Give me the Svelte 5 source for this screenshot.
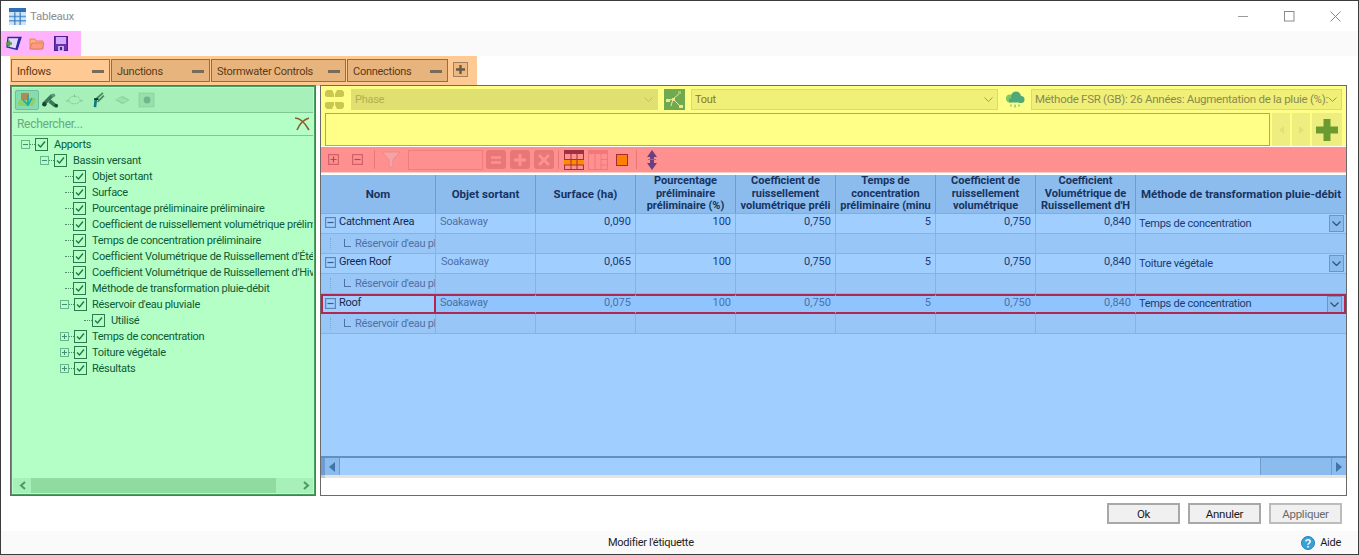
<script>
  const tabs = [
    { name: 'Inflows', w: 99, active: true },
    { name: 'Junctions', w: 99 },
    { name: 'Stormwater Controls', w: 135 },
    { name: 'Connections', w: 101 }
  ];
  const leaves = [
    'Objet sortant', 'Surface', 'Pourcentage préliminaire préliminaire',
    'Coefficient de ruissellement volumétrique préliminaire', 'Temps de concentration préliminaire',
    "Coefficient Volumétrique de Ruissellement d'Été", "Coefficient Volumétrique de Ruissellement d'Hiver",
    'Méthode de transformation pluie-débit'
  ];
  const closed = ['Temps de concentration', 'Toiture végétale', 'Résultats'];
  const headers = [
    ['Nom'], ['Objet sortant'], ['Surface (ha)'],
    ['Pourcentage', 'préliminaire', 'préliminaire (%)'],
    ['Coefficient de', 'ruissellement', 'volumétrique préli'],
    ['Temps de', 'concentration', 'préliminaire  (minu'],
    ['Coefficient de', 'ruissellement', 'volumétrique'],
    ['Coefficient', 'Volumétrique de', "Ruissellement d'H"],
    ['Méthode de transformation pluie-débit']
  ];
  const rows = [
    { name: 'Catchment Area', area: '0,090', method: 'Temps de concentration', v: '0,840' },
    { name: 'Green Roof', area: '0,065', method: 'Toiture végétale', v: '0,840', shift: true },
    { name: 'Roof', area: '0,075', method: 'Temps de concentration', v: '0,840', selected: true }
  ];
</script>

{#snippet check()}
  <svg class="check" viewBox="0 0 13 13"><rect x=".5" y=".5" width="12" height="12" fill="none" stroke="#2d7a4d"/><path d="M3 6.500 5.500 9 10 3.500" fill="none" stroke="#1f7a45" stroke-width="1.400"/></svg>
{/snippet}

{#snippet box(open, cls = 'exp')}
  <svg class={cls} viewBox="0 0 9 9"><rect x=".5" y=".5" width="8" height="8" fill="none" stroke="currentColor" opacity=".65"/><path d={open ? 'M2 4.500h5' : 'M2 4.500h5M4.500 2v5'} stroke="currentColor"/></svg>
{/snippet}

<div class="window">
  <header class="title">
    <svg class="tableicon" viewBox="0 0 16 16"><rect width="16" height="4" fill="#2f6fb5"/><rect y="4" width="16" height="12" fill="#cfe3f7"/><path d="M0 8h16M0 12h16" stroke="#5b9ad8" stroke-width="1.400"/><path d="M5.500 4v12M10.500 4v12" stroke="#2f6fb5"/></svg>
    <span class="titletext">Tableaux</span>
    <div class="winctl">
      <svg viewBox="0 0 11 11"><path d="M0 5.500h10" stroke="#9a9a9a"/></svg>
      <svg viewBox="0 0 11 11"><rect x=".5" y=".5" width="9.500" height="9.500" fill="none" stroke="#8a8a8a"/></svg>
      <svg viewBox="0 0 11 11"><path d="M.5.500l10 10M10.500.500l-10 10" stroke="#8a8a8a"/></svg>
    </div>
  </header>

  <div class="quickbar">
    <div class="quick">
      <svg viewBox="0 0 17 15"><path d="M3 1.500h13L12 13.500 2 11z" fill="#e4d8ff" stroke="#2c2ca8" stroke-width="1.300"/><path d="M14.500 2 11.500 13" stroke="#2c2ca8" stroke-width="2.200"/><path d="M1 7.500h6M4 4.500v6" stroke="#5d9a50" stroke-width="2.300"/></svg>
      <svg viewBox="0 0 16 13"><path d="M1 2h5l1 2h7v8H1z" fill="#ffb080" stroke="#e08a50"/><path d="M1 12 3 6h12l-2 6z" fill="#ff9a80" stroke="#e08060"/></svg>
      <svg viewBox="0 0 14 15"><rect x=".5" y=".5" width="13" height="14" fill="#6a30b0" stroke="#4a2090"/><rect x="2" y="1" width="10" height="7" fill="#d8a8ff"/><rect x="4" y="10" width="6" height="5" fill="#c8a8e8"/><rect x="6" y="11" width="2" height="3" fill="#4a2090"/></svg>
    </div>
  </div>

  <div class="tabband">
    {#each tabs as t}
      <div class="tab" class:active={t.active} style="width:{t.w}px"><span>{t.name}</span><i class="dash"></i></div>
    {/each}
    <div class="addtab"><svg viewBox="0 0 15 15"><rect x=".5" y=".5" width="14" height="14" fill="#f0b880" stroke="#a08060"/><path d="M7.500 3v9M3 7.500h9" stroke="#6a5a48" stroke-width="2.400"/></svg></div>
  </div>

  <div class="content">
    <aside class="left">
      <div class="lefttools">
        <span class="tool on"><svg viewBox="0 0 20 16"><path d="M1 10 5 6h14l-3 8H1z" fill="#8fd06a"/><path d="M4 1h8v7H4z" fill="#b08a50"/><path d="M11 3v11M6 8l5 5 4-7" stroke="#18a8b0" stroke-width="1.500" fill="none"/></svg></span>
        <span class="tool"><svg viewBox="0 0 18 16"><path d="M2 12 11 3M8 9l6 5" stroke="#3a7a5a" stroke-width="4"/><circle cx="2.500" cy="12.500" r="2.400" fill="#184a34"/><circle cx="15" cy="14" r="2" fill="#184a34"/><circle cx="12" cy="3" r="2" fill="#5a9a7a"/></svg></span>
        <span class="tool faint"><svg viewBox="0 0 18 14"><ellipse cx="9" cy="7" rx="6" ry="4" fill="none" stroke="#70b888" stroke-dasharray="2 1"/><path d="M0 8h3M15 8h3M9 1v3" stroke="#70b888"/></svg></span>
        <span class="tool"><svg viewBox="0 0 14 18"><path d="M3 9 12 1M6 11 13 4" stroke="#4a8a60" stroke-width="2"/><path d="M4 8 3 17" stroke="#107a80" stroke-width="3"/><path d="M2 8h5" stroke="#103a28" stroke-width="2"/></svg></span>
        <span class="tool faint"><svg viewBox="0 0 16 10"><path d="M1 5 8 1l7 4-7 4z" fill="#86d09e"/><path d="M4 5l4-2M6 6l4-2M8 7l4-2" stroke="#a8f0ba"/></svg></span>
        <span class="tool faint"><svg viewBox="0 0 15 14"><rect x="1" y="1" width="13" height="12" fill="#93dca8" stroke="#86d09c"/><circle cx="8" cy="7" r="3" fill="#62a880"/></svg></span>
      </div>
      <div class="search">
        <span>Rechercher...</span>
        <svg viewBox="0 0 16 14"><path d="M1 1c6 0 10 5 14 12M15 1C9 3 5 8 3 13" fill="none" stroke="#8a6030" stroke-width="1.600"/></svg>
      </div>
      <div class="tree">
        <div class="node l0">{@render box(true)}<i class="dot"></i>{@render check()}<span>Apports</span></div>
        <div class="node l1">{@render box(true)}<i class="dot"></i>{@render check()}<span>Bassin versant</span></div>
        {#each leaves as n}
          <div class="node l2"><i class="dot long"></i>{@render check()}<span>{n}</span></div>
        {/each}
        <div class="node l1b">{@render box(true)}<i class="dot"></i>{@render check()}<span>Réservoir d'eau pluviale</span></div>
        <div class="node l3"><i class="dot long"></i>{@render check()}<span>Utilisé</span></div>
        {#each closed as n}
          <div class="node l1b">{@render box(false)}<i class="dot"></i>{@render check()}<span>{n}</span></div>
        {/each}
      </div>
      <div class="lscroll">
        <svg viewBox="0 0 8 9"><path d="M6 1 2 4.500l4 3.500" fill="none" stroke="#4a9a60" stroke-width="2"/></svg>
        <i class="lthumb"></i>
        <svg viewBox="0 0 8 9"><path d="M2 1l4 3.500-4 3.500" fill="none" stroke="#4a9a60" stroke-width="2"/></svg>
      </div>
    </aside>

    <section class="right">
      <div class="yellow">
        <div class="filters">
          <span class="ficon"><svg viewBox="0 0 21 21"><path d="M1 7V3l2-2h5l2 4V8H3zM20 7V3l-2-2h-5l-2 4V8h7zM1 14v4l2 2h5l2-4v-3H3zM20 14v4l-2 2h-5l-2-4v-3h7z" fill="#c8c850"/></svg></span>
          <div class="combo disabled wide"><span>Phase</span><svg viewBox="0 0 9 5"><path d="M.5.500l4 4 4-4" fill="none" stroke="#c0c060"/></svg></div>
          <span class="ficon green"><svg viewBox="0 0 21 21"><rect width="21" height="21" fill="#6faa50"/><path d="M3 12 9 10 16 4M9 10l8 8M9 10 7 17" stroke="#e8e8a0" fill="none"/><rect x="2" y="10" width="4" height="3" fill="#e8e890"/><rect x="8" y="9" width="3" height="3" fill="#e8e890"/><rect x="14" y="2" width="3" height="3" fill="#96d060"/><rect x="15" y="16" width="4" height="3" fill="#e8e890"/></svg></span>
          <div class="combo wide"><span class="tout">Tout</span><svg viewBox="0 0 9 5"><path d="M.5.500l4 4 4-4" fill="none" stroke="#a0a050"/></svg></div>
          <span class="ficon"><svg viewBox="0 0 21 18"><circle cx="6" cy="8" r="4" fill="#7fc86a"/><circle cx="12" cy="6" r="5" fill="#4fa87a"/><circle cx="17" cy="9" r="3.500" fill="#4fa87a"/><rect x="5" y="8" width="13" height="4" fill="#4fa87a"/><path d="M7 14v2M11 14v3M15 14v2" stroke="#4fa87a"/></svg></span>
          <div class="combo last"><span class="method">Méthode FSR (GB): 26 Années: Augmentation de la pluie (%):</span><svg viewBox="0 0 9 5"><path d="M.5.500l4 4 4-4" fill="none" stroke="#909070"/></svg></div>
        </div>
        <div class="namerow">
          <div class="namebox"></div>
          <span class="navbtn"><svg viewBox="0 0 7 10"><path d="M6 1v8L1 5z" fill="#e0e07a"/></svg></span>
          <span class="navbtn"><svg viewBox="0 0 7 10"><path d="M1 1v8l5-4z" fill="#e0e07a"/></svg></span>
          <span class="navbtn big"><svg viewBox="0 0 24 24"><path d="M12 1v22M1 12h22" stroke="#6a9a30" stroke-width="7"/></svg></span>
        </div>
      </div>

      <div class="red">
        <span class="mini">{@render box(false, 'mb strong')}</span>
        <span class="mini">{@render box(true, 'mb')}</span>
        <i class="sep"></i>
        <svg class="funnel" viewBox="0 0 20 17"><path d="M1 1h18l-7 8v7h-4V9z" fill="#f4a4a4" stroke="#f08888"/></svg>
        <div class="filterinput"></div>
        <span class="sq"><svg viewBox="0 0 14 14"><path d="M2 4.500h10M2 9.500h10" stroke="#ff9090" stroke-width="2.500"/></svg></span>
        <span class="sq"><svg viewBox="0 0 14 14"><path d="M7 1v12M1 7h12" stroke="#ff9090" stroke-width="3"/></svg></span>
        <span class="sq"><svg viewBox="0 0 14 14"><path d="M2 2l10 10M12 2 2 12" stroke="#ff9090" stroke-width="3"/></svg></span>
        <i class="sep"></i>
        <svg class="gridicon" viewBox="0 0 20 20"><rect x=".5" y=".5" width="19" height="19" fill="#ff9090" stroke="#a03040"/><rect width="20" height="4" fill="#a03040"/><rect y="10" width="20" height="5" fill="#ff8c00"/><path d="M7 4v16M13 4v16M0 9.500h20M0 15h20" stroke="#a03040"/></svg>
        <svg class="gridicon dim" viewBox="0 0 20 20"><rect x=".5" y=".5" width="19" height="19" fill="#ff9090" stroke="#f07878"/><rect width="20" height="4" fill="#f07878"/><path d="M7 4v16M13 4v16M13 9.500h7M13 15h7" stroke="#f07878"/></svg>
        <span class="swatch"></span>
        <i class="sep final"></i>
        <svg class="updown" viewBox="0 0 12 20"><path d="M6 0 11 7H8v6h3l-5 7-5-7h3V7H1z" fill="#6a4080"/><path d="M2 9.500h8" stroke="#8f6aa0"/></svg>
      </div>

      <div class="grid">
        <div class="head row">
          {#each headers as h, i}
            <div class="hcell" class:first={i === 0} class:lastcol={i === 8} class:single={h.length === 1}>
              {#each h as line}<div>{line}</div>{/each}
            </div>
          {/each}
        </div>
        {#each rows as r}
          <div class="row datarow" class:sel={r.selected}>
            <div class="cell first namec">{@render box(true, 'rowexp')}<span class="rname">{r.name}</span></div>
            <div class="cell out" class:shift={r.shift}>Soakaway</div>
            <div class="cell num">{r.area}</div>
            <div class="cell num">100</div>
            <div class="cell num">0,750</div>
            <div class="cell num">5</div>
            <div class="cell num">0,750</div>
            <div class="cell num">{r.v}</div>
            <div class="cell lastcol meth"><span>{r.method}</span>
              <span class="drop"><svg viewBox="0 0 9 5"><path d="M.5.500l4 4 4-4" fill="none" stroke="#2a5080" stroke-width="1.200"/></svg></span>
            </div>
          </div>
          <div class="row subrow">
            <div class="cell first subn"><i class="vdots"></i><i class="ell"></i><span>Réservoir d'eau pluviale</span></div>
            {#each Array(7) as _}<div class="cell"></div>{/each}
            <div class="cell lastcol"></div>
          </div>
        {/each}
        <div class="gridfill"></div>
        <div class="hscroll">
          <i class="corner"></i>
          <span class="arrow"><svg viewBox="0 0 6 10"><path d="M6 0v10L0 5z" fill="#3f74ad"/></svg></span>
          <i class="thumb"></i>
          <i class="track"></i>
          <span class="arrow r"><svg viewBox="0 0 6 10"><path d="M0 0v10l6-5z" fill="#3f74ad"/></svg></span>
        </div>
        <div class="greystrip"></div>
        <div class="blank"></div>
      </div>
    </section>
  </div>

  <div class="buttons">
    <button>Ok</button>
    <button>Annuler</button>
    <button class="disabledbtn">Appliquer</button>
  </div>

  <footer class="status">
    <span class="label">Modifier l'étiquette</span>
    <span class="help">
      <svg viewBox="0 0 14 14"><circle cx="7" cy="7" r="6.500" fill="#3aa0d8" stroke="#2a80b8"/><path d="M4.800 5.500C5 3 9.200 3 9.200 5.500 9.200 7 7 7 7 8.800" fill="none" stroke="#fff" stroke-width="1.500"/><rect x="6.200" y="10" width="1.600" height="1.600" fill="#fff"/></svg>
      Aide
    </span>
  </footer>
</div>

<style>
  :global(body) { margin: 0; background: #fff; }
  .window {
    width: 1359px; height: 555px; box-sizing: border-box; overflow: hidden;
    border: 1px solid #3c3c3c; background: #fff;
    display: flex; flex-direction: column;
    font: 11px/13px Roboto, "Liberation Sans", sans-serif; color: #1a1a1a; letter-spacing: -.27px;
  }
  svg { display: block; flex: none; }
  i { display: block; flex: none; }

  .title { height: 30px; display: flex; align-items: center; padding-left: 8px; flex: none; }
  .tableicon { width: 17px; height: 17px; margin-right: 4px; }
  .titletext { color: #8c8c96; font-size: 11.500px; }
  .winctl { margin-left: auto; display: flex; align-items: center; gap: 35px; padding-right: 17px; }
  .winctl svg { width: 11px; height: 11px; }

  .quickbar { height: 25px; flex: none; background: #fafafa; }
  .quick { width: 80px; height: 25px; background: #ffb3ff; display: flex; align-items: center; padding-left: 4px; box-sizing: border-box; }
  .quick svg:first-child { width: 17px; height: 15px; }
  .quick svg:nth-child(2) { width: 16px; height: 13px; margin-left: 7px; }
  .quick svg:nth-child(3) { width: 14px; height: 15px; margin-left: 9px; }

  .tabband { width: 467px; height: 30px; margin-left: 9px; background: #ffc994; flex: none; display: flex; align-items: flex-start; padding: 3px 0 0 1px; box-sizing: border-box; margin-bottom: -1px; gap: 1px; }
  .tab { height: 23px; box-sizing: border-box; background: #e8b47e; border: 1px solid #a06a34; display: flex; align-items: center; padding: 1px 5px 0 5px; justify-content: space-between; color: #5a3a18; }
  .tab.active { background: #ffc994; }
  .dash { width: 12px; height: 3px; background: #7a6a58; }
  .addtab { margin: 3px 0 0 4px; }
  .addtab svg { width: 15px; height: 15px; }

  .content { display: flex; gap: 4px; padding-left: 9px; height: 411px; flex: none; position: relative; }

  .left { width: 306px; box-sizing: border-box; border: 1px solid #6a6a6a; background: #b3ffc6; box-shadow: inset 0 0 0 1px #4c9f60; display: flex; flex-direction: column; padding: 2px; overflow: hidden; }
  .lefttools { height: 24px; flex: none; background: #a8f0ba; border-bottom: 1px solid #7fc894; display: flex; align-items: center; padding-left: 2px; gap: 4px; }
  .tool { width: 18px; height: 18px; display: flex; align-items: center; justify-content: center; margin-right: 2px; }
  .tool svg { width: 17px; height: 16px; }
  .tool.on { width: 24px; height: 20px; background: #86dcae; border: 1px solid #6cc0a0; box-sizing: border-box; border-radius: 2px; margin-right: -2px; }
  .tool.on svg { width: 20px; }
  .tool.faint { opacity: .8; }
  .search { height: 22px; flex: none; display: flex; align-items: center; justify-content: space-between; padding: 0 3px 0 4px; border-bottom: 1px solid #7fc894; color: #6aa884; font-size: 12px; }
  .search svg { width: 16px; height: 14px; }
  .tree { flex: 1; overflow: hidden; min-height: 0; }
  .node { height: 16px; display: flex; align-items: center; white-space: nowrap; color: #0e5a36; }
  .node span { margin-left: 6px; }
  .l1b span { margin-left: 5px; }
  .check { width: 13px; height: 13px; }
  .exp { width: 9px; height: 9px; color: #3f8f70; }
  .dot { width: 5px; border-top: 1px dotted #4f8a6a; }
  .dot.long { width: 8px; }
  .l0 { padding-left: 8px; }
  .l1 { padding-left: 27px; }
  .l1b { padding-left: 47px; }
  .l2 { padding-left: 52px; }
  .l3 { padding-left: 71px; }
  .lscroll { height: 15px; flex: none; background: #a8f0ba; display: flex; align-items: center; padding: 0 3px 0 6px; }
  .lscroll svg { width: 8px; height: 9px; }
  .lthumb { width: 245px; height: 15px; background: #90dba0; margin: 0 26px 0 4px; }

  .right { width: 1027px; box-sizing: border-box; border: 1px solid #6a6a6a; display: flex; flex-direction: column; background: #fff; }
  .yellow { height: 60px; flex: none; background: #ffff88; display: flex; flex-direction: column; padding-top: 2px; box-sizing: border-box; }
  .filters { height: 22px; display: flex; align-items: center; padding-left: 3px; }
  .ficon { width: 21px; height: 21px; display: flex; }
  .ficon svg { width: 21px; height: 21px; }
  .combo { height: 21px; box-sizing: border-box; display: flex; align-items: center; justify-content: space-between; padding: 1px 4px 0 3px; background: #f0f078; border: 1px solid #dcdc60; margin: 0 6px; }
  .combo svg { width: 9px; height: 5px; }
  .combo.disabled { background: #e0e070; border-color: #e0e070; color: #b0b050; }
  .wide { width: 307px; }
  .last { width: 311px; margin-right: 0; }
  .tout { color: #8a7a20; }
  .method { color: #8a8a50; font-size: 11.500px; white-space: nowrap; }
  .namerow { display: flex; margin-top: 3px; padding-left: 4px; }
  .namebox { width: 945px; height: 33px; box-sizing: border-box; border: 1px solid #b4ac40; background: #ffff88; margin-right: 2px; }
  .navbtn { width: 18px; height: 33px; background: #eeee80; margin-right: 2px; display: flex; align-items: center; justify-content: center; }
  .navbtn svg { width: 7px; height: 10px; }
  .navbtn.big { width: 30px; }
  .navbtn.big svg { width: 24px; height: 24px; }

  .red { height: 26px; margin-top: 1px; flex: none; background: #ff9090; display: flex; align-items: center; padding-left: 5px; border-bottom: 1px solid #ffd0c8; box-sizing: border-box; }
  .mini { width: 11px; height: 11px; margin: 0 5px 0 2px; display: flex; }
  .mini + .mini { margin-left: 8px; }
  .red :global(.mb) { width: 11px; height: 11px; color: #b84858; }
  .sep { width: 1px; height: 19px; background: #e87878; margin: 0 6px 0 9px; }
  .mini + .sep { margin-left: 6px; }
  .sq + .sep { margin: 0 5px 0 0; }
  .sep.final { margin: 0 9px 0 0; }
  .funnel { width: 20px; height: 17px; margin-right: 7px; }
  .filterinput { width: 73px; height: 18px; border: 1px solid #f07c7c; background: #ff9090; margin-right: 3px; }
  .sq { width: 20px; height: 19px; background: #e87878; border-radius: 3px; margin-right: 4px; display: flex; align-items: center; justify-content: center; }
  .sq svg { width: 14px; height: 14px; }
  .gridicon { width: 20px; height: 20px; margin-right: 4px; }
  .gridicon.dim { margin-right: 8px; }
  .swatch { width: 10px; height: 10px; background: #ff8000; border: 1px solid #a03030; margin: 0 8px 0 0; }
  .updown { width: 12px; height: 20px; }

  .grid { flex: 1; display: flex; flex-direction: column; margin-top: 2px; min-height: 0; background: #a0ceff; }
  .row { display: flex; flex: none; }
  .head { height: 39px; background: #8cbcee; border-bottom: 1px solid #7aaee4; box-sizing: border-box; }
  .hcell { width: 100px; box-sizing: border-box; border-right: 1px solid #6a9cd0; display: flex; flex-direction: column; align-items: center; justify-content: center; text-align: center; font-weight: 700; color: #17335f; line-height: 12.600px; white-space: nowrap; overflow: hidden; letter-spacing: 0; }
  .hcell.single { font-size: 11.500px; }
  .first { width: 115px; }
  .lastcol { width: 210px; border-right: 0; }
  .datarow, .subrow { height: 20px; }
  .cell { width: 100px; box-sizing: border-box; border-right: 1px solid #82b4ea; border-bottom: 1px solid #82b4ea; white-space: nowrap; overflow: hidden; color: #1c3a70; padding: 0 4px; display: flex; align-items: center; }
  .cell.first { width: 115px; padding: 0 0 0 4px; }
  .cell.lastcol { width: 210px; border-right: 0; position: relative; }
  .num { justify-content: flex-end; align-items: flex-start; padding: 1px 4px 0; letter-spacing: 0; }
  .out { color: #5070a8; align-items: flex-start; padding-top: 1px; }
  .out.shift { padding-left: 5px; }
  .namec { align-items: flex-start; padding-top: 1px; }
  .rname { color: #142a50; margin-top: 1px; }
  .rowexp { width: 11px; height: 11px; margin: 3px 3px 0 0; color: #3a5f90; }
  .meth { padding-left: 3px; color: #1c3a70; justify-content: space-between; padding-right: 2px; }
  .drop { width: 15px; height: 17px; box-sizing: border-box; border: 1px solid #6c94c4; background: #8cbcee; display: flex; align-items: center; justify-content: center; }
  .drop svg { width: 9px; height: 5px; }
  .subrow .cell { background: #98c6f6; }
  .subn { color: #5070a8; }
  .vdots { height: 12px; border-left: 1px dotted #7aa8d8; margin: 0 13px 0 5px; }
  .ell { width: 6px; height: 7px; border-left: 1px solid #5070a8; border-bottom: 1px solid #5070a8; margin-right: 4px; margin-top: -2px; }
  .sel { background: #90c4ff; position: relative; }
  .sel .cell { color: #4a70a8; border-top: 2px solid #b02850; border-bottom: 2px solid #b02850; border-right-color: transparent; padding-top: 0; }
  .sel .cell.first { background: #a0ceff; border: 2px solid #b02850; color: #142a50; }
  .sel .cell.first .rname { margin-top: 0; }
  .sel .rowexp { margin: 2px 3px 0 -2px; }
  .sel .cell.lastcol { border-right: 2px solid #b02850; align-items: center; }
  .sel .meth span:first-child { color: #1c3a70; margin-top: -1px; }
  .gridfill { flex: 1; min-height: 0; border-bottom: 2px solid #5f8fc4; }
  .hscroll { height: 17px; flex: none; display: flex; }
  .corner { width: 4px; background: #6c9cd0; }
  .arrow { width: 15px; box-sizing: border-box; background: #8cbcee; border-right: 1px solid #6c9cd0; display: flex; align-items: center; justify-content: center; }
  .arrow svg { width: 6px; height: 10px; }
  .arrow.r { border-right: 0; border-left: 1px solid #6c9cd0; }
  .thumb { width: 920px; background: #a0ceff; border-right: 1px solid #6c9cd0; }
  .track { flex: 1; background: #8cbcee; }
  .greystrip { height: 3px; background: #e4e4e4; flex: none; border-left: 4px solid #c8c8c8; }
  .blank { height: 17px; background: #fff; flex: none; }

  .buttons { flex: none; height: 35px; display: flex; justify-content: flex-end; gap: 8px; padding: 7px 16px 0 0; box-sizing: border-box; }
  button { width: 73px; height: 21px; box-sizing: border-box; border: 2px solid #a8a8a8; background: #f0f0f0; font: 11.500px/13px Roboto, sans-serif; letter-spacing: -.27px; color: #1a1a1a; padding: 2px 0 0; }
  .disabledbtn { color: #6a6a6a; border-color: #bcbcbc; }

  .status { flex: 1; background: #fafafa; position: relative; display: flex; align-items: center; justify-content: flex-end; padding-right: 17px; }
  .label { position: absolute; left: 607px; top: 5px; color: #222; }
  .help { display: flex; align-items: center; gap: 5px; }
  .help svg { width: 14px; height: 14px; }
</style>
